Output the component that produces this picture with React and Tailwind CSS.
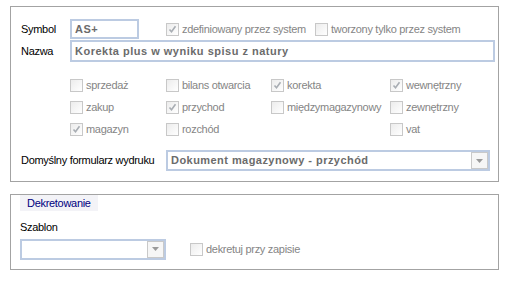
function Check({ checked }) {
  return (
    <span className="flex h-[13px] w-[13px] shrink-0 items-center justify-center border border-[#c8c8c8] bg-gradient-to-br from-[#ececec] to-white">
      {checked && (
        <svg width="9" height="9" viewBox="0 0 9 9">
          <path d="M1.5 4.5 L3.5 6.8 L7.5 1.2" fill="none" stroke="#a8adb3" strokeWidth="1.6" />
        </svg>
      )}
    </span>
  );
}

function CheckItem({ label, checked }) {
  return (
    <div className="flex h-[13px] items-center gap-[3px] text-[#858585]">
      <Check checked={checked} />
      <span className="leading-none">{label}</span>
    </div>
  );
}

function Arrow() {
  return (
    <span className="flex h-full w-[17px] items-center justify-center border border-[#c9c9c9] bg-[#f6f6f6]">
      <svg width="7" height="4" viewBox="0 0 7 4">
        <path d="M0 0 L7 0 L3.5 4 Z" fill="#9a9a9a" />
      </svg>
    </span>
  );
}

const options = [
  ['sprzedaż', false], ['bilans otwarcia', false], ['korekta', true], ['wewnętrzny', true],
  ['zakup', false], ['przychod', true], ['międzymagazynowy', false], ['zewnętrzny', false],
  ['magazyn', true], ['rozchód', false], null, ['vat', false],
];

export default function App() {
  return (
    <div className="h-[288px] w-[517px] bg-white pl-[10px] pt-[6px] font-['Tahoma','Liberation_Sans',sans-serif] text-[11px] tracking-[-0.3px] text-black">
      <div className="h-[176px] w-[489px] border border-[#a3a3a3] pl-[10px] pr-[3px] pt-[12px]">
        <div className="flex h-[20px] items-center">
          <span className="w-[49px]">Symbol</span>
          <div className="flex h-[20px] w-[69px] items-center border-2 border-[#bccbe2] px-[3px] font-bold tracking-[0.5px] text-[#6b6b6b]">
            AS+
          </div>
          <div className="ml-[27px] w-[149px]">
            <CheckItem label="zdefiniowany przez system" checked />
          </div>
          <CheckItem label="tworzony tylko przez system" />
        </div>

        <div className="mt-[1px] flex h-[22px] items-center">
          <span className="w-[49px]">Nazwa</span>
          <div className="flex h-[22px] w-[425px] items-center border-2 border-[#bccbe2] px-[3px] font-bold tracking-[0.5px] text-[#6b6b6b]">
            Korekta plus w wyniku spisu z natury
          </div>
        </div>

        <div className="ml-[49px] mt-[17px] grid grid-cols-[96px_105px_119px_auto] gap-y-[9px]">
          {options.map((o, i) =>
            o ? <CheckItem key={i} label={o[0]} checked={o[1]} /> : <div key={i} />
          )}
        </div>

        <div className="mt-[14px] flex h-[21px] items-center">
          <span className="w-[145px]">Domyślny formularz wydruku</span>
          <div className="flex h-[21px] w-[324px] items-center border-2 border-[#bccbe2]">
            <span className="flex-1 px-[3px] font-bold tracking-[0.45px] text-[#6b6b6b]">
              Dokument magazynowy - przychód
            </span>
            <Arrow />
          </div>
        </div>
      </div>

      <div className="mt-[12px] h-[76px] w-[489px] border border-[#a3a3a3] pl-[9px]">
        <div className="-mt-[2px] inline-flex h-[16px] items-center bg-[#f3f3f7] px-[7px] text-[#000080]">
          Dekretowanie
        </div>
        <div className="mt-[10px] leading-none">Szablon</div>
        <div className="mt-[6px] flex items-center">
          <div className="flex h-[21px] w-[146px] items-center border-2 border-[#bccbe2]">
            <span className="flex-1" />
            <Arrow />
          </div>
          <div className="ml-[24px]">
            <CheckItem label="dekretuj przy zapisie" />
          </div>
        </div>
      </div>
    </div>
  );
}
